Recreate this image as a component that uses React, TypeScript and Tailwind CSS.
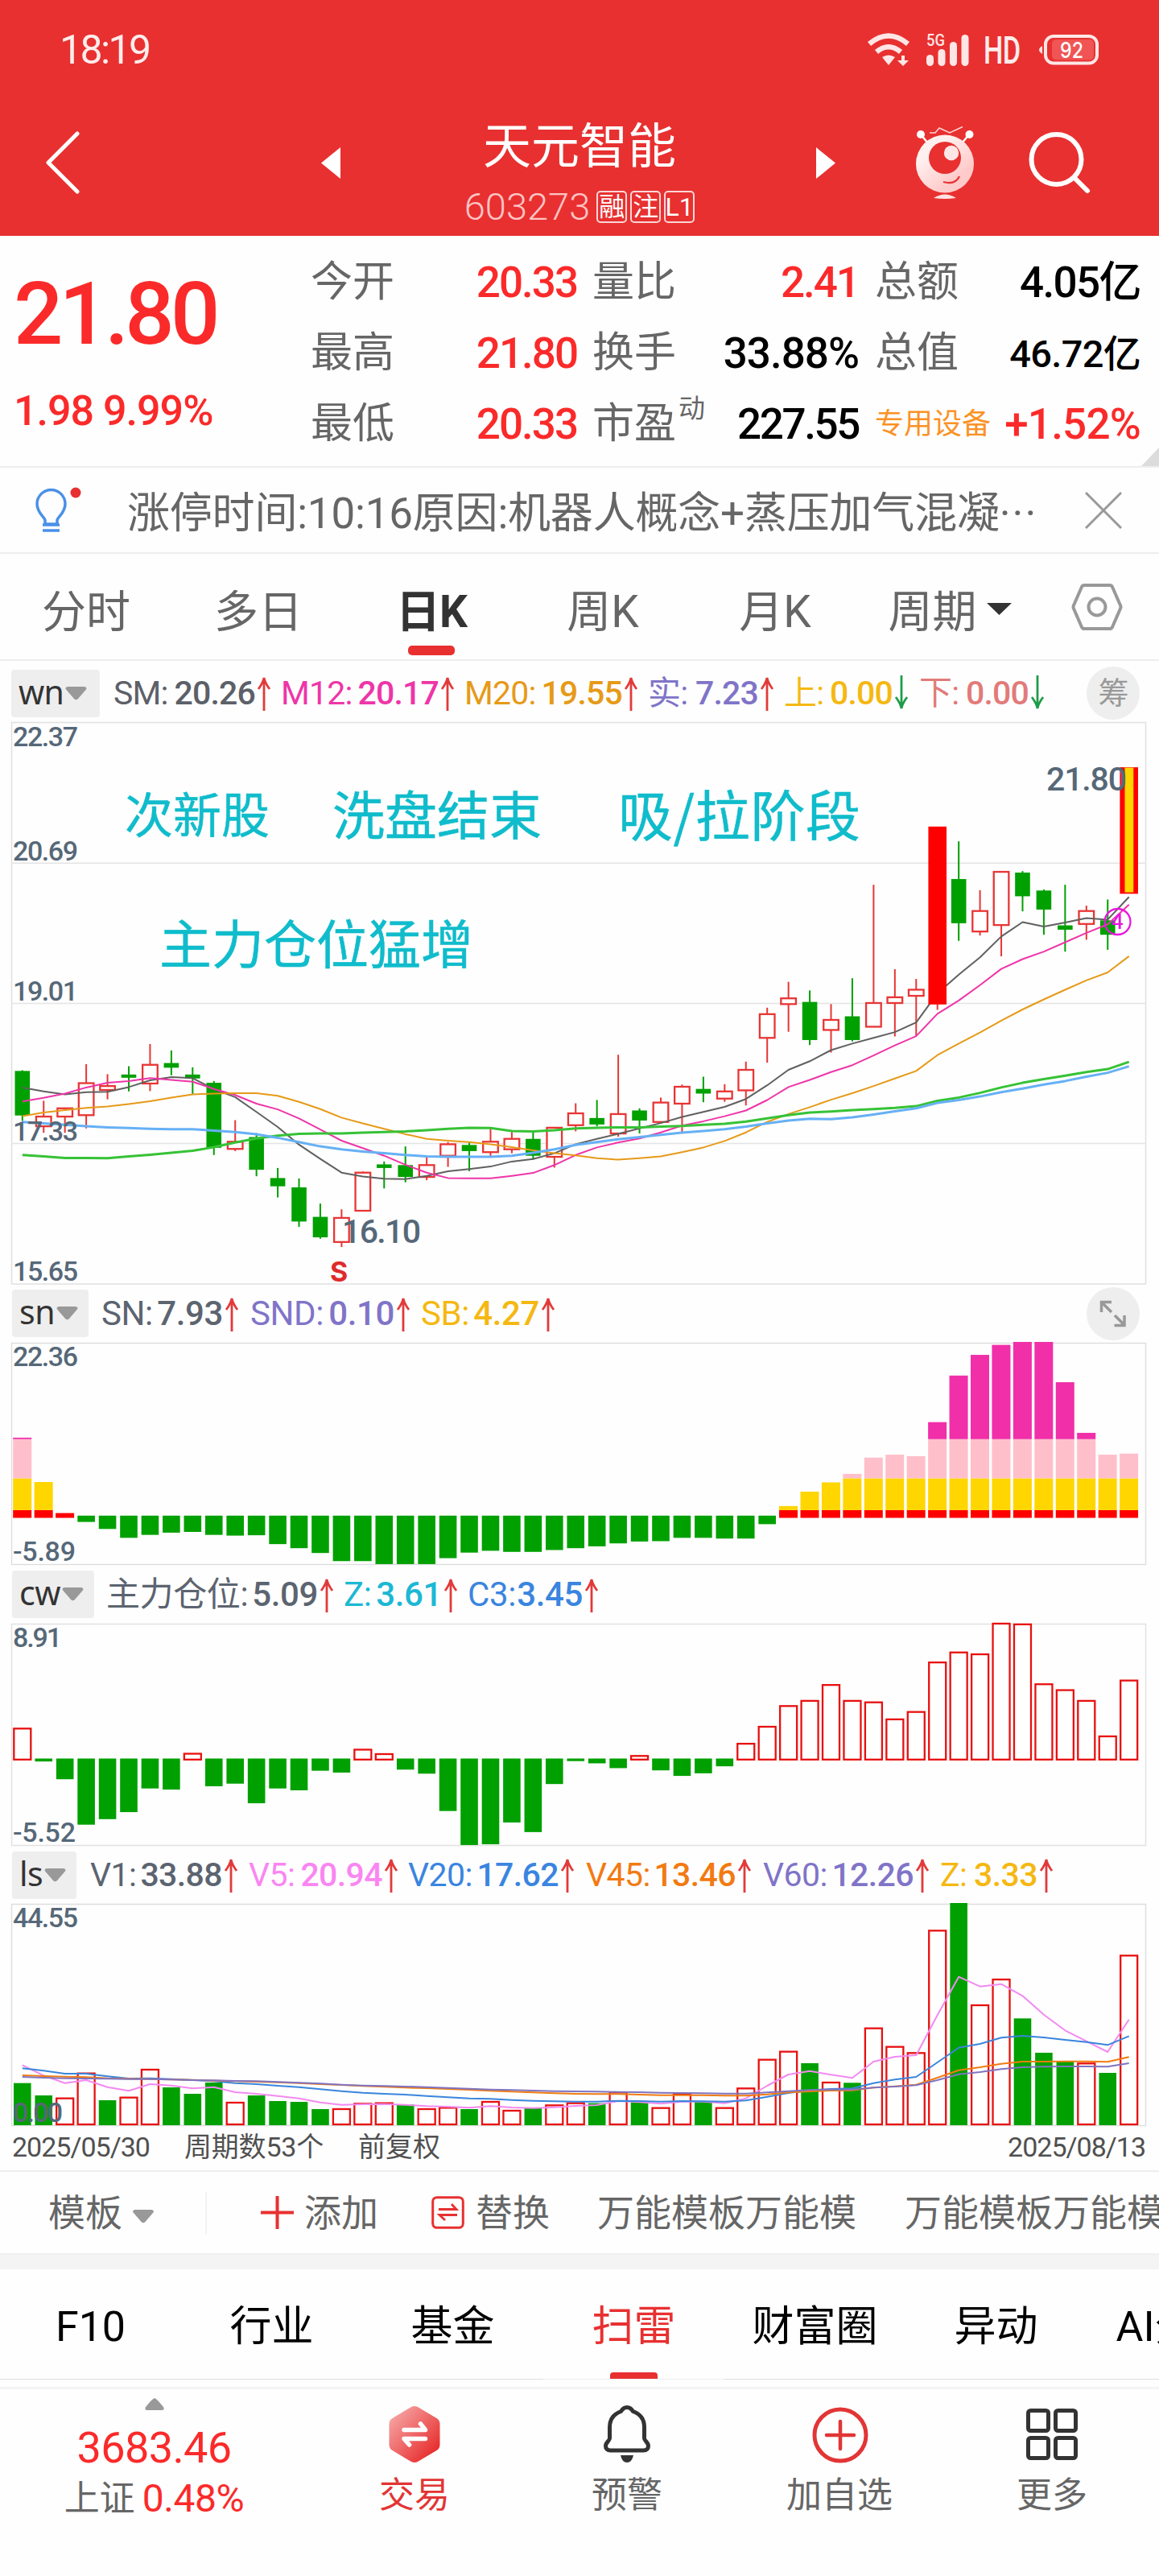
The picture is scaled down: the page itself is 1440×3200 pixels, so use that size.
import React from "react";

/* ---------- series data ---------- */

const FIRST_X = 27.8;
const PITCH = 26.44;
const cx = (i: number) => FIRST_X + i * PITCH;

type Candle = ["r" | "g", number, number, number, number];

// high, body top, body bottom, low
const CANDLES: Candle[] = [
  ["g", 962, 964, 1088, 1103], ["r", 1047, 1091, 1118, 1136], ["r", 1066, 1068, 1091, 1136], ["r", 945, 998, 1087, 1124],
  ["r", 973, 1006, 1017, 1043], ["g", 951, 974, 983, 1021], ["r", 889, 947, 999, 1020], ["g", 907, 942, 955, 976],
  ["g", 954, 974, 985, 1028], ["g", 992, 997, 1178, 1198], ["r", 1101, 1161, 1181, 1187], ["g", 1137, 1148, 1239, 1257],
  ["g", 1234, 1262, 1285, 1316], ["g", 1263, 1288, 1383, 1398], ["g", 1333, 1370, 1427, 1431], ["r", 1349, 1373, 1440, 1454],
  ["r", 1244, 1247, 1353, 1353], ["g", 1216, 1224, 1234, 1291], ["g", 1174, 1226, 1259, 1274], ["r", 1204, 1226, 1259, 1268],
  ["r", 1162, 1168, 1200, 1231], ["g", 1163, 1170, 1187, 1243], ["r", 1125, 1161, 1190, 1205], ["r", 1134, 1153, 1182, 1193],
  ["g", 1133, 1153, 1200, 1211], ["r", 1121, 1122, 1203, 1233], ["r", 1054, 1082, 1115, 1132], ["g", 1045, 1095, 1113, 1118],
  ["r", 919, 1084, 1138, 1147], ["g", 1068, 1074, 1102, 1138], ["r", 1038, 1052, 1106, 1110], ["r", 1002, 1008, 1055, 1134],
  ["g", 980, 1014, 1027, 1051], ["r", 1001, 1021, 1041, 1050], ["r", 938, 961, 1018, 1060], ["r", 788, 806, 872, 941],
  ["r", 716, 762, 778, 855], ["g", 740, 772, 878, 892], ["r", 778, 822, 850, 913], ["g", 706, 812, 878, 882],
  ["r", 446, 775, 841, 841], ["r", 681, 759, 775, 868], ["r", 708, 738, 755, 866], ["r", 285, 286, 778, 794],
  ["g", 325, 430, 553, 602], ["r", 461, 519, 576, 587], ["r", 408, 410, 558, 645], ["g", 408, 412, 478, 520],
  ["g", 459, 462, 515, 585], ["g", 446, 559, 571, 632], ["r", 504, 519, 555, 599], ["g", 487, 545, 585, 627],
  ["r", 120, 120, 470, 470],
];

const SM = [1010, 1021, 1029, 1023, 1022, 1009, 990, 981, 984, 1015, 1037, 1078, 1120, 1169, 1209, 1247, 1258, 1264, 1265, 1256, 1243, 1237, 1230, 1216, 1209, 1193, 1168, 1153, 1139, 1124, 1109, 1092, 1078, 1064, 1042, 1004, 961, 937, 906, 888, 872, 856, 829, 748, 696, 648, 590, 550, 562, 551, 539, 543, 480];
const M12 = [1049, 1039, 1027, 1010, 997, 992, 984, 989, 994, 1014, 1031, 1055, 1071, 1096, 1127, 1158, 1179, 1200, 1225, 1247, 1262, 1263, 1263, 1256, 1248, 1226, 1198, 1177, 1163, 1152, 1135, 1116, 1104, 1090, 1074, 1045, 1009, 989, 967, 948, 921, 893, 867, 805, 768, 725, 680, 653, 632, 606, 580, 556, 501];
const M20 = [1090, 1080, 1073, 1067, 1063, 1056, 1048, 1038, 1029, 1027, 1026, 1026, 1033, 1050, 1070, 1094, 1110, 1125, 1140, 1153, 1158, 1162, 1168, 1176, 1185, 1193, 1199, 1207, 1211, 1207, 1202, 1190, 1177, 1159, 1135, 1106, 1084, 1065, 1044, 1026, 1006, 985, 964, 920, 888, 857, 824, 793, 765, 738, 712, 690, 645];
const LONG_A = [1198, 1202, 1206, 1206, 1207, 1202, 1197, 1192, 1186, 1176, 1163, 1152, 1144, 1139, 1138, 1138, 1136, 1134, 1132, 1129, 1125, 1122, 1123, 1131, 1132, 1129, 1124, 1122, 1121, 1121, 1119, 1117, 1114, 1111, 1105, 1096, 1087, 1080, 1077, 1073, 1070, 1067, 1062, 1047, 1038, 1025, 1010, 997, 987, 977, 967, 959, 939];
const LONG_B = [1106, 1110, 1114, 1118, 1121, 1123, 1125, 1126, 1126, 1130, 1134, 1140, 1150, 1162, 1174, 1182, 1188, 1193, 1198, 1202, 1203, 1203, 1203, 1200, 1192, 1182, 1170, 1162, 1154, 1148, 1142, 1136, 1131, 1126, 1119, 1110, 1102, 1097, 1098, 1093, 1085, 1076, 1068, 1053, 1045, 1035, 1023, 1013, 1002, 992, 980, 969, 951];

const SN = [427, 547, 631, 655, 674, 698, 690, 684, 682, 690, 692, 691, 715, 726, 739, 761, 761, 769, 769, 769, 753, 738, 733, 736, 736, 731, 726, 721, 713, 708, 707, 698, 698, 700, 700, 661, 612, 573, 548, 525, 481, 473, 477, 385, 259, 203, 176, 168, 168, 277, 414, 473, 470];

const CW = [1213, 1302, 1350, 1473, 1458, 1439, 1375, 1378, 1281, 1369, 1362, 1415, 1375, 1380, 1327, 1332, 1270, 1282, 1324, 1335, 1436, 1528, 1526, 1467, 1493, 1363, 1301, 1307, 1320, 1287, 1326, 1341, 1334, 1315, 1254, 1208, 1152, 1138, 1095, 1138, 1142, 1188, 1168, 1034, 1007, 1012, 929, 931, 1093, 1109, 1138, 1234, 1083];

const LS = [893, 939, 950, 857, 957, 947, 843, 909, 933, 891, 966, 939, 960, 963, 990, 990, 970, 968, 973, 990, 985, 990, 963, 996, 986, 976, 968, 968, 928, 964, 986, 934, 961, 986, 913, 806, 776, 819, 891, 892, 689, 758, 781, 325, 222, 603, 507, 652, 780, 812, 820, 855, 418];
const V5 = [826, 865, 893, 882, 908, 922, 897, 902, 913, 908, 927, 933, 941, 950, 965, 974, 972, 971, 974, 979, 981, 985, 979, 984, 986, 983, 978, 975, 960, 964, 970, 962, 962, 968, 950, 903, 861, 848, 862, 874, 813, 795, 789, 640, 497, 533, 524, 568, 638, 697, 737, 777, 656];
const V20 = [838, 847, 858, 858, 868, 876, 875, 878, 882, 886, 893, 897, 903, 908, 916, 923, 929, 933, 936, 941, 946, 950, 952, 956, 959, 961, 962, 962, 959, 960, 962, 960, 961, 962, 958, 944, 930, 920, 915, 913, 893, 880, 870, 816, 761, 747, 724, 717, 723, 732, 740, 751, 718];
const V45 = [864, 867, 869, 871, 875, 877, 878, 880, 881, 884, 886, 888, 890, 893, 897, 900, 904, 907, 910, 912, 915, 918, 922, 925, 928, 931, 933, 934, 934, 936, 938, 938, 938, 940, 940, 935, 928, 924, 921, 920, 910, 905, 899, 873, 845, 834, 821, 813, 813, 812, 812, 814, 796];
const V60 = [870, 873, 875, 876, 877, 878, 878, 880, 882, 883, 885, 886, 889, 892, 895, 899, 902, 904, 906, 908, 911, 914, 917, 919, 921, 923, 924, 925, 926, 927, 929, 930, 931, 932, 932, 928, 923, 919, 917, 917, 910, 906, 901, 882, 860, 852, 841, 834, 832, 831, 831, 832, 819];

const GREEN = "#00a000";
const CJK = '"Noto Sans CJK SC", sans-serif';
const NUM = 'Roboto, "Noto Sans CJK SC", sans-serif';

/* ---------- chart helpers ---------- */

type Scale = (v: number) => number;

function Line({ data, y, color, w }: { data: number[]; y: Scale; color: string; w: number }) {
  return (
    <polyline
      points={data.map((v, i) => `${cx(i).toFixed(1)},${y(v).toFixed(1)}`).join(" ")}
      fill="none"
      stroke={color}
      strokeWidth={w}
      strokeLinejoin="round"
    />
  );
}

function Hollow({ x, top, bottom, w, color = "#e81010" }: { x: number; top: number; bottom: number; w: number; color?: string }) {
  return <rect x={x - w / 2 + 1} y={top + 1} width={w - 2} height={Math.max(bottom - top - 2, 2)} fill="#fff" stroke={color} strokeWidth={2.3} />;
}

function Label({ x, y, children, len, size = 34 }: { x: number; y: number; children: string; len: number; size?: number }) {
  return (
    <text x={x} y={y} fontFamily={NUM} fontSize={size} fontWeight={500} fill="#566878" textLength={len}>
      {children}
    </text>
  );
}

function MainChart() {
  const y: Scale = (v) => v / 2.24 + 4;
  return (
    <svg className="block shrink-0 overflow-visible" width={1440} height={700} viewBox="0 0 1440 700">
      <rect x={14.5} y={1.5} width={1409} height={697.5} fill="none" stroke="#e0e0e0" strokeWidth={1.5} />
      {[386, 776, 1166].map((g) => (
        <line key={g} x1={14} x2={1424} y1={y(g)} y2={y(g)} stroke="#e4e4e4" strokeWidth={1.5} />
      ))}
      {CANDLES.slice(0, 52).map(([t, h, a, b, l], i) => {
        const c = t === "g" ? GREEN : "#e83535";
        if (i === 43) return null;
        return (
          <g key={i}>
            <line x1={cx(i)} x2={cx(i)} y1={y(h)} y2={t === "g" ? y(l) : y(a)} stroke={c} strokeWidth={2} />
            {t === "r" && <line x1={cx(i)} x2={cx(i)} y1={y(b)} y2={y(l)} stroke={c} strokeWidth={2} />}
            {t === "g" ? (
              <rect x={cx(i) - 9.3} y={y(a)} width={18.6} height={y(b) - y(a)} fill={c} />
            ) : (
              <Hollow x={cx(i)} top={y(a) - 1} bottom={y(b) + 1} w={20.6} color={c} />
            )}
          </g>
        );
      })}
      <Line data={SM} y={y} color="#606060" w={2} />
      <Line data={M12} y={y} color="#ee35a8" w={2} />
      <Line data={M20} y={y} color="#e69a18" w={2} />
      <Line data={LONG_A} y={y} color="#36c236" w={3} />
      <Line data={LONG_B} y={y} color="#66b0f5" w={3} />
      <line x1={cx(43)} x2={cx(43)} y1={y(778)} y2={y(794)} stroke="#e83535" strokeWidth={2} />
      <rect x={cx(43) - 11.3} y={y(284)} width={22.6} height={y(779) - y(284)} fill="#ff0000" />
      <rect x={cx(52) - 11.3} y={y(119)} width={22.6} height={y(471) - y(119)} fill="#ff0000" />
      <rect x={cx(52) - 5.2} y={y(120)} width={10.8} height={y(467) - y(120)} fill="#ffd500" />

      <Label x={16} y={31} len={81}>22.37</Label>
      <Label x={16} y={173} len={81}>20.69</Label>
      <Label x={16} y={347} len={81}>19.01</Label>
      <Label x={16} y={521} len={81}>17.33</Label>
      <Label x={16} y={695} len={81}>15.65</Label>
      <Label x={425} y={648} len={98} size={41}>16.10</Label>
      <Label x={1300} y={86} len={100} size={41}>21.80</Label>

      <g fontFamily={CJK} fill="#10bccb" stroke="#10bccb" strokeWidth={0.5}>
        <text x={155} y={139} fontSize={60}>次新股</text>
        <text x={413} y={141} fontSize={65}>洗盘结束</text>
        <text x={768} y={143} fontSize={68} textLength={301}>吸/拉阶段</text>
        <text x={198} y={301} fontSize={65}>主力仓位猛增</text>
      </g>
      <text x={410} y={696} fontFamily="Inter, sans-serif" fontSize={34} fontWeight={700} fill="#dd2c2c">S</text>
      <circle cx={1388.5} cy={249} r={16} fill="none" stroke="#e815e0" strokeWidth={2.3} />
      <text x={1388.5} y={258} textAnchor="middle" fontFamily={CJK} fontSize={26} fontWeight={500} fill="#e815e0">4</text>
    </svg>
  );
}

function SnChart() {
  const y: Scale = (v) => (v - 168) / 2.178;
  const layers: [number, number, string][] = [
    [644, 623, "#ff0000"],
    [623, 537, "#ffd600"],
    [537, 431, "#ffbfca"],
    [431, 0, "#f02fa8"],
  ];
  return (
    <svg className="block shrink-0 overflow-visible" width={1440} height={278} viewBox="0 0 1440 278">
      <rect x={14.5} y={1.5} width={1409} height={275} fill="none" stroke="#dcdcdc" strokeWidth={1.3} />
      {SN.map((v, i) =>
        v > 644 ? (
          <rect key={i} x={cx(i) - 10.8} y={y(638)} width={21.6} height={y(v) - y(638)} fill={GREEN} />
        ) : (
          <g key={i}>
            {layers
              .filter(([b]) => v < b)
              .map(([b, t, c]) => {
                const top = Math.max(t, v);
                return <rect key={c} x={cx(i) - 11.6} y={y(top)} width={23} height={y(b) - y(top)} fill={c} />;
              })}
          </g>
        ),
      )}
      <Label x={16} y={30} len={81}>22.36</Label>
      <Label x={16} y={272} len={78}>-5.89</Label>
    </svg>
  );
}

function CwChart() {
  const y: Scale = (v) => (v - 927) / 2.178;
  return (
    <svg className="block shrink-0 overflow-visible" width={1440} height={278} viewBox="0 0 1440 278">
      <rect x={14.5} y={1.5} width={1409} height={275} fill="none" stroke="#e2e2e2" strokeWidth={1.5} />
      {CW.map((v, i) =>
        v > 1295 ? (
          <rect key={i} x={cx(i) - 10.8} y={y(1294)} width={21.6} height={y(v) - y(1294)} fill={GREEN} />
        ) : (
          <Hollow key={i} x={cx(i)} top={y(v) - 1} bottom={y(1299)} w={23} />
        ),
      )}
      <Label x={16} y={30} len={61}>8.91</Label>
      <Label x={16} y={272} len={78}>-5.52</Label>
    </svg>
  );
}

const LS_GREEN = [0, 1, 4, 7, 8, 9, 11, 12, 13, 14, 18, 21, 24, 27, 29, 32, 37, 39, 44, 47, 48, 49, 51];

function LsChart() {
  const y: Scale = (v) => (v - 222) / 3;
  return (
    <svg className="block shrink-0 overflow-visible" width={1440} height={278} viewBox="0 0 1440 278">
      <rect x={14.5} y={1.5} width={1409} height={275} fill="none" stroke="#dedede" strokeWidth={1.5} />
      {LS.map((v, i) =>
        LS_GREEN.includes(i) ? (
          <rect key={i} x={cx(i) - 10.8} y={y(v)} width={21.6} height={y(1050) - y(v)} fill={GREEN} />
        ) : (
          <Hollow key={i} x={cx(i)} top={y(v) - 1} bottom={y(1050)} w={23} />
        ),
      )}
      <Line data={V5} y={y} color="#f28af0" w={2} />
      <Line data={V20} y={y} color="#3a85dc" w={2} />
      <Line data={V45} y={y} color="#f07c10" w={2} />
      <Line data={V60} y={y} color="#8074c0" w={2} />
      <Label x={16} y={30} len={81}>44.55</Label>
      <Label x={16} y={272} len={62}>0.00</Label>
    </svg>
  );
}

/* ---------- indicator rows ---------- */

function Arrow({ up }: { up: boolean }) {
  return (
    <svg className="ml-0.5 shrink-0" width={18} height={44} viewBox="0 0 18 44">
      {up ? (
        <path d="M9 44V3M2 17C5 13 8 8 9 3C10 8 13 13 16 17" fill="none" stroke="#e23a3a" strokeWidth={2.8} />
      ) : (
        <path d="M9 0V41M2 27C5 31 8 36 9 41C10 36 13 31 16 27" fill="none" stroke="#1f9c4a" strokeWidth={2.8} />
      )}
    </svg>
  );
}

function Item({ cls, label, value, up = true }: { cls: string; label: string; value: string; up?: boolean }) {
  return (
    <div className={`flex shrink-0 items-center ${cls}`}>
      <div className="flex flex-1 justify-between leading-none">
        <span>{label}:</span>
        <span className="font-medium">{value}</span>
      </div>
      <Arrow up={up} />
    </div>
  );
}

function Chip({ children, cls }: { children: string; cls: string }) {
  return (
    <div className={`flex h-[59px] shrink-0 items-center gap-0.5 rounded-[4px] bg-[#eeeeee] pl-[9px] font-['Noto_Sans','Noto_Sans_CJK_SC',sans-serif] text-[41px] leading-none text-[#333] ${cls}`}>
      <span className="-mt-1">{children}</span>
      <svg className="shrink-0" width={27} height={17} viewBox="0 0 27 17">
        <path d="M3 0h21q4 1 1.500 4L16 15q-2.500 2.500-5 0L1.500 4Q-1 1 3 0Z" fill="#999" />
      </svg>
    </div>
  );
}

/* ---------- quote table ---------- */

function Quote({ label, value, lcls = "text-[52px] text-[#666]", vcls, sup }: { label: string; value: string; lcls?: string; vcls: string; sup?: string }) {
  return (
    <div className="flex h-[88px] items-center justify-between">
      <span className={`relative leading-none tracking-normal ${lcls}`}>
        {label}
        {sup && <span className="absolute -right-[36px] -top-[10px] text-[33px] leading-none">{sup}</span>}
      </span>
      <span className={`font-medium leading-none ${vcls}`}>{value}</span>
    </div>
  );
}

function Tab({ children, cls }: { children: React.ReactNode; cls: string }) {
  return <div className={`flex shrink-0 items-center justify-center pt-[14px] text-[55px] leading-none ${cls}`}>{children}</div>;
}

function Nav({ children, label, cls }: { children: React.ReactNode; label: string; cls: string }) {
  return (
    <div className="flex w-[264px] flex-col items-center pt-4">
      <svg width={80} height={80} viewBox="0 0 80 80">{children}</svg>
      <span className={`mt-[14px] text-[44px] leading-none ${cls}`}>{label}</span>
    </div>
  );
}

export default function App() {
  return (
    <div className="flex h-[3200px] w-[1440px] flex-col overflow-hidden whitespace-nowrap bg-[#fefefe] font-[Roboto,'Noto_Sans_CJK_SC',sans-serif]">
      {/* header */}
      <header className="h-[293px] shrink-0 bg-[#e83030] text-white">
        <div className="flex h-[124px] items-center pl-[74px] pr-[72px]">
          <span className="text-[50px] leading-none tracking-[-2.6px] text-[#ffecec]">18:19</span>
          <svg className="ml-auto" width={52} height={42} viewBox="0 0 52 42">
            <g fill="none" stroke="#ffe6e6" strokeWidth={6.500}>
              <path d="M2 13.500Q26-6.500 50 13.500" />
              <path d="M11 23.500Q26 11 41 23.500" />
            </g>
            <path d="M18 30Q26 25 34 30L26 40Z" fill="#ffe6e6" />
            <path d="M42 28h4v6h5l-7 7-7-7h5Z" fill="#ffe6e6" />
          </svg>
          <svg className="ml-[21px] overflow-visible" width={54} height={42} viewBox="0 0 54 42">
            <text x={0} y={16} fontFamily="Roboto, sans-serif" fontWeight={500} fontSize={20} textLength={23} lengthAdjust="spacingAndGlyphs" fill="#ffe6e6">5G</text>
            <g fill="#ffe6e6">
              <rect x={0} y={27} width={9} height={14} rx={4.500} />
              <rect x={14.500} y={20} width={9} height={21} rx={4.500} />
              <rect x={29} y={11} width={9} height={30} rx={4.500} />
              <rect x={43.500} y={2} width={9} height={39} rx={4.500} />
            </g>
          </svg>
          <span className="ml-[17px] w-[50px] text-[49px] font-medium leading-none tracking-[-1px] text-[#ffecec]">
            <span className="block origin-left scale-x-[.7]">HD</span>
          </span>
          <svg className="ml-[18px] mr-[2px]" width={76} height={40} viewBox="0 0 76 40">
            <path d="M5 15v10Q-3 20 5 15Z" fill="#ffdede" />
            <rect x={9} y={3} width={64} height={33.500} rx={10} fill="none" stroke="#ffe6e6" strokeWidth={4} />
            <rect x={17} y={7} width={52} height={25.500} rx={5} fill="#f05454" />
            <text x={41.500} y={29.500} textAnchor="middle" fontFamily="Inter, sans-serif" fontWeight={500} fontSize={27} textLength={29} lengthAdjust="spacingAndGlyphs" fill="#fff">92</text>
          </svg>
        </div>
        <div className="flex h-[169px] pl-[56px]">
          <svg className="mt-[39px]" width={44} height={78} viewBox="0 0 44 78">
            <path d="M40 3L4 39l36 36" fill="none" stroke="#fff" strokeWidth={5} strokeLinecap="round" strokeLinejoin="round" />
          </svg>
          <svg className="ml-[299px] mt-[59px]" width={24} height={39} viewBox="0 0 24 39">
            <path d="M24 0v39L0 19.500Z" fill="#fff" />
          </svg>
          <div className="flex w-[591px] flex-col items-center pl-[3px]">
            <h1 className="mt-[26px] text-[60px] leading-[66px]">天元智能</h1>
            <div className="mt-[16px] flex items-center gap-[4px]">
              <span className="mr-[4px] text-[47px] font-light leading-[50px] text-[#ffc4c4]">603273</span>
              {["融", "注", "L1"].map((t) => (
                <span key={t} className="flex h-[40px] w-[38px] items-center justify-center rounded-[5px] border-2 border-white/80 text-[32px] leading-none">
                  {t}
                </span>
              ))}
            </div>
          </div>
          <svg className="mt-[59px]" width={24} height={39} viewBox="0 0 24 39">
            <path d="M0 0v39l24-19.500Z" fill="#fff" />
          </svg>
          <svg className="ml-[98px] mt-[30px]" width={76} height={94} viewBox="0 0 76 94">
            <defs>
              <linearGradient id="bot" x1="0" y1="0" x2=".8" y2="1">
                <stop offset=".3" stopColor="#fff0f0" />
                <stop offset=".8" stopColor="#ffcaca" />
              </linearGradient>
            </defs>
            <path d="M8 13l9 11M68 13l-9 11" stroke="#fff" strokeWidth={2.500} />
            <circle cx={8} cy={13} r={5} fill="#fff" />
            <circle cx={68.500} cy={13} r={5} fill="#fff" />
            <path d="M19 11h7l5-6 13 6L60 3.500" fill="none" stroke="#ffd5d5" strokeWidth={1.500} />
            <circle cx={38} cy={49.500} r={36} fill="url(#bot)" />
            <circle cx={38} cy={42} r={20} fill="#e83030" />
            <circle cx={46} cy={36} r={9.200} fill="#ffe6e6" />
            <path d="M36 72q15 4 20-7" fill="none" stroke="#e83030" strokeWidth={2.200} />
            <path d="M24 92q14-9 28 0q-14 2-28 0Z" fill="#ffe2e2" />
          </svg>
          <svg className="ml-[66px] mt-[38px]" width={80} height={80} viewBox="0 0 80 80">
            <circle cx={34.500} cy={36} r={31} fill="none" stroke="#fff" strokeWidth={6} />
            <path d="M58 60l15 15" stroke="#fff" strokeWidth={6} strokeLinecap="round" />
          </svg>
        </div>
      </header>

      {/* quote summary */}
      <section className="relative flex h-[288px] shrink-0 border-b-2 border-[#eeeeee] pt-[14px]">
        <div className="w-[386px] pl-[17px] text-[#fb2a2a]">
          <div className="mt-[29px] text-[108px] font-medium leading-none tracking-[-4.8px]">21.80</div>
          <div className="mt-[39px] text-[52px] font-medium leading-[56px] tracking-[-1px]">1.98 9.99%</div>
        </div>
        <div className="w-[331px] text-[53px] tracking-[-2px]">
          <Quote label="今开" value="20.33" vcls="text-[#fb2a2a]" />
          <Quote label="最高" value="21.80" vcls="text-[#fb2a2a]" />
          <Quote label="最低" value="20.33" vcls="text-[#fb2a2a]" />
        </div>
        <div className="ml-[19px] w-[331px] text-[53px] tracking-[-2px]">
          <Quote label="量比" value="2.41" vcls="text-[#fb2a2a]" />
          <Quote label="换手" value="33.88%" vcls="text-black tracking-[-1px]" />
          <Quote label="市盈" value="227.55" vcls="text-black tracking-[-2.4px]" sup="动" />
        </div>
        <div className="ml-[20px] w-[330px] text-[53px]">
          <Quote label="总额" value="4.05亿" vcls="text-[53px] tracking-[-1.6px] text-black" />
          <Quote label="总值" value="46.72亿" vcls="text-[47px] tracking-[-0.7px] text-black" />
          <Quote label="专用设备" value="+1.52%" lcls="text-[36px] text-[#fb9226]" vcls="tracking-[-0.8px] text-[#fb2a2a]" />
        </div>
        <svg className="absolute bottom-0 right-0" width={22} height={23} viewBox="0 0 22 23">
          <path d="M22 0v23H0Z" fill="#dcdcdc" />
        </svg>
      </section>

      {/* tip */}
      <section className="flex h-[107px] shrink-0 items-center border-b-2 border-[#eeeeee] pl-[42px]">
        <svg className="mt-[3px]" width={60} height={60} viewBox="0 0 60 60">
          <g fill="none" stroke="#4a90e8" strokeWidth={3.500}>
            <path d="M14 46V41C13 37 4 32 4 21a17.500 17.500 0 0 1 35 0C39 32 30 37 29 41v5Z" strokeLinejoin="round" />
            <path d="M11 47h21M11 54h21" />
          </g>
          <circle cx={52} cy={7} r={6.500} fill="#e83030" />
        </svg>
        <p className="ml-[56px] w-[1135px] pt-[10px] text-[53px] leading-none tracking-[-0.2px] text-[#666]">
          涨停时间:10:16原因:机器人概念+蒸压加气混凝
          <span className="tracking-[2px]">···</span>
        </p>
        <svg className="ml-[55px]" width={46} height={46} viewBox="0 0 46 46">
          <path d="M1 1l44 44M45 1L1 45" stroke="#999" strokeWidth={3} />
        </svg>
      </section>

      {/* period tabs */}
      <nav className="flex h-[133px] shrink-0 border-b-2 border-[#eeeeee] text-[#666]">
        <Tab cls="w-[214px]">分时</Tab>
        <Tab cls="w-[214px]">多日</Tab>
        <Tab cls="relative w-[216px] font-bold text-[#333]">
          <span className="tracking-[-1px]">日K</span>
          <span className="absolute bottom-[5px] h-[12px] w-[58px] rounded-[5px] bg-[#e83030]" />
        </Tab>
        <Tab cls="w-[210px]">周K</Tab>
        <Tab cls="w-[218px]">月K</Tab>
        <Tab cls="w-[216px] gap-[12px]">
          周期
          <svg className="-mt-2" width={31} height={15} viewBox="0 0 31 15"><path d="M0 0h31L15.500 15Z" fill="#333" /></svg>
        </Tab>
        <Tab cls="w-[150px]">
          <svg className="-mt-[14px]" width={64} height={58} viewBox="0 0 64 58">
            <path d="M16 2h32q2 0 3 2l10 23q1 2 0 4L51 54q-1 2-3 2H16q-2 0-3-2L3 31q-1-2 0-4L13 4q1-2 3-2Z" fill="none" stroke="#999" strokeWidth={4} />
            <circle cx={32} cy={29} r={10.500} fill="none" stroke="#999" strokeWidth={4} />
          </svg>
        </Tab>
      </nav>

      {/* main indicator */}
      <div className="flex h-[75px] shrink-0 items-center pl-[14px] pt-[5px] text-[41px] tracking-[-0.8px]">
        <Chip cls="w-[110px]">wn</Chip>
        <Item cls="ml-[17px] w-[196px] text-[#5c6068]" label="SM" value="20.26" />
        <Item cls="ml-[12px] w-[216px] text-[#ee35a8]" label="M12" value="20.17" />
        <Item cls="ml-[12px] w-[216px] text-[#e69a18]" label="M20" value="19.55" />
        <Item cls="ml-[12px] w-[157px] text-[#8074c8]" label="实" value="7.23" />
        <Item cls="ml-[12px] w-[155px] text-[#f5b812]" label="上" value="0.00" up={false} />
        <Item cls="ml-[13px] w-[156px] text-[#e27a7a]" label="下" value="0.00" up={false} />
        <span className="ml-[52px] flex size-[66px] items-center justify-center rounded-full bg-[#eeeeee] text-[38px] leading-none text-[#999]">
          筹
        </span>
      </div>
      <MainChart />

      {/* sn */}
      <div className="flex h-[71px] shrink-0 items-center pl-[15px] text-[42px] tracking-[-0.4px]">
        <Chip cls="w-[95px]">sn</Chip>
        <Item cls="ml-[16px] w-[171px] text-[#5c6470]" label="SN" value="7.93" />
        <Item cls="ml-[14px] w-[199px] text-[#8074c8]" label="SND" value="0.10" />
        <Item cls="ml-[13px] w-[167px] text-[#f5b812]" label="SB" value="4.27" />
        <span className="ml-auto mr-[24px] flex size-[66px] items-center justify-center rounded-full bg-[#eeeeee]">
          <svg width={36} height={36} viewBox="0 0 36 36">
            <path d="M3.500 16V3.500H16M4 4l12 12M32 20v12.500H19.500M32 32L20 20" fill="none" stroke="#999" strokeWidth={3.500} />
          </svg>
        </span>
      </div>
      <SnChart />

      {/* cw */}
      <div className="flex h-[71px] shrink-0 items-center pl-[15px] text-[42px] tracking-[-0.4px]">
        <Chip cls="w-[102px]">cw</Chip>
        <Item cls="ml-[15px] w-[283px] text-[#5c6470]" label="主力仓位" value="5.09" />
        <Item cls="ml-[12px] w-[142px] text-[#1cb8d4]" label="Z" value="3.61" />
        <Item cls="ml-[12px] w-[163px] text-[#3a85e0]" label="C3" value="3.45" />
      </div>
      <CwChart />

      {/* ls */}
      <div className="flex h-[70px] shrink-0 items-center pl-[15px] text-[41px] tracking-[-0.6px]">
        <Chip cls="w-[80px]">ls</Chip>
        <Item cls="ml-[17px] w-[184px] text-[#5c6470]" label="V1" value="33.88" />
        <Item cls="ml-[13px] w-[186px] text-[#f986f2]" label="V5" value="20.94" />
        <Item cls="ml-[12px] w-[207px] text-[#3a85e0]" label="V20" value="17.62" />
        <Item cls="ml-[14px] w-[206px] text-[#f27a12]" label="V45" value="13.46" />
        <Item cls="ml-[14px] w-[207px] text-[#8074c8]" label="V60" value="12.26" />
        <Item cls="ml-[13px] w-[141px] text-[#f5b812]" label="Z" value="3.33" />
      </div>
      <LsChart />

      <div className="flex h-[56px] shrink-0 items-center border-b-2 border-[#eeeeee] pb-[4px] pl-[15px] pr-[17px] text-[34px] leading-none tracking-[-1px] text-[#505050]">
        <span className="w-[214px]">2025/05/30</span>
        <span className="w-[216px] tracking-[-0.2px]">周期数53个</span>
        <span className="tracking-normal">前复权</span>
        <span className="ml-auto">2025/08/13</span>
      </div>

      {/* templates */}
      <div className="flex h-[101px] shrink-0 items-center overflow-hidden pl-[60px] text-[46px] leading-none text-[#666]">
        <span className="shrink-0">模板</span>
        <svg className="ml-[12px] mt-[10px] shrink-0" width={28} height={17} viewBox="0 0 27 17">
          <path d="M3 0h21q4 1 1.500 4L16 15q-2.500 2.500-5 0L1.500 4Q-1 1 3 0Z" fill="#999" />
        </svg>
        <span className="ml-[63px] h-[52px] w-[2px] shrink-0 bg-[#f2f2f2]" />
        <svg className="ml-[67px] shrink-0" width={41} height={41} viewBox="0 0 41 41">
          <path d="M20.500 0v41M0 20.500h41" stroke="#e83030" strokeWidth={4} />
        </svg>
        <span className="ml-[13px] shrink-0">添加</span>
        <svg className="ml-[66px] shrink-0" width={41} height={41} viewBox="0 0 41 41">
          <rect x={1.700} y={1.700} width={37.600} height={37.600} rx={5} fill="none" stroke="#e83030" strokeWidth={3} />
          <path d="M9 16.500h22L25 10M32 23.500H10l7 6.500" fill="none" stroke="#e83030" strokeWidth={2.800} />
        </svg>
        <span className="ml-[14px] shrink-0">替换</span>
        <span className="ml-[59px] shrink-0">万能模板万能模</span>
        <span className="ml-[60px] shrink-0">万能模板万能模</span>
      </div>
      <div className="h-[20px] shrink-0 border-t-2 border-[#efefef] bg-[#f4f4f4]" />

      {/* content tabs */}
      <nav className="flex h-[137px] shrink-0 text-[52px] leading-none text-black">
        {["F10", "行业", "基金", "扫雷", "财富圈", "异动", "AI分析"].map((t) => (
          <div
            key={t}
            className={
              t === "扫雷"
                ? "relative flex w-[225px] shrink-0 items-center justify-center border-b border-[#f0f0f0] pt-[7px] text-[#e83030]"
                : "flex w-[225px] shrink-0 items-center justify-center border-b-[1.5px] border-[#dedede] pt-[7px]"
            }
          >
            {t}
            {t === "扫雷" && <span className="absolute bottom-0 h-[8px] w-[59px] rounded-t-[4px] bg-[#e83030]" />}
          </div>
        ))}
      </nav>
      <div className="h-[12px] shrink-0 border-b-[3px] border-[#f4f4f4]" />

      {/* bottom bar */}
      <footer className="flex flex-1">
        <div className="flex w-[383px] flex-col items-center pt-[11px] text-[#fb2a2a]">
          <svg width={26} height={15} viewBox="0 0 26 15">
            <path d="M13 0Q15 0 24 11q2 4-2 4H4q-4 0-2-4Q11 0 13 0Z" fill="#999" />
          </svg>
          <span className="mt-[20px] text-[54px] leading-none tracking-[-0.6px]">3683.46</span>
          <div className="mt-[12px] flex items-center gap-[9px] text-[44px] leading-none">
            <span className="text-[#666]">上证</span>
            <span className="text-[48px] tracking-[-0.4px]">0.48%</span>
          </div>
        </div>
        <Nav label="交易" cls="text-[#e23535]">
          <defs>
            <linearGradient id="hex" x1="0" y1="0" x2="1" y2="1">
              <stop offset=".1" stopColor="#f6a4a4" />
              <stop offset=".85" stopColor="#e83030" />
            </linearGradient>
          </defs>
          <path d="M36 6q4-2 8 0l23.500 14q4 2.500 4 7v26q0 4.500-4 7L44 74q-4 2-8 0L12.500 60q-4-2.500-4-7V27q0-4.500 4-7Z" fill="url(#hex)" />
          <path d="M27 34.500h26.500L47.500 27M53.500 45.500H27l6.500 7.500" fill="none" stroke="#fff" strokeWidth={5.500} strokeLinecap="round" strokeLinejoin="round" />
        </Nav>
        <Nav label="预警" cls="text-[#666]">
          <path d="M40 6.500c-4 0-6 2.500-7.500 5C23 15 18.500 22 18.500 31v14c0 3-5 5-5 9.500 0 3 2 5.500 6 5.500h41c4 0 6-2.500 6-5.500 0-4.500-5-6.500-5-9.500V31c0-9-4.500-16-14-19.500-1.500-2.500-3.500-5-7.500-5Z" fill="none" stroke="#333" strokeWidth={5} strokeLinejoin="round" />
          <path d="M32 66h16q-2 9-8 9t-8-9Z" fill="#333" />
        </Nav>
        <Nav label="加自选" cls="text-[#666]">
          <circle cx={41} cy={41} r={32} fill="none" stroke="#e23535" strokeWidth={5} />
          <path d="M41 24v34M24 41h34" stroke="#e23535" strokeWidth={4.500} strokeLinecap="round" />
        </Nav>
        <Nav label="更多" cls="text-[#666]">
          <g fill="none" stroke="#333" strokeWidth={5}>
            <rect x={10.500} y={10.500} width={25} height={25} rx={3} />
            <rect x={44.500} y={10.500} width={25} height={25} rx={3} />
            <rect x={10.500} y={44.500} width={25} height={25} rx={3} />
            <rect x={44.500} y={44.500} width={25} height={25} rx={3} />
          </g>
        </Nav>
      </footer>
    </div>
  );
}
